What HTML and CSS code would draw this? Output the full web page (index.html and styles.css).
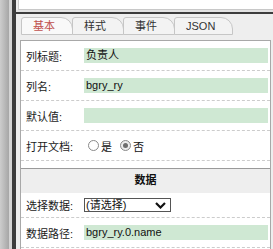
FILE: index.html
```html
<!DOCTYPE html>
<html lang="zh">

<head>
    <meta charset="UTF-8">
    <title>列属性</title>
    <link rel="stylesheet" href="styles.css">
</head>

<body>
    <div class="gutter"></div>
    <div class="gutter-edge"></div>
    <div class="vsplit"></div>
    <div class="main">
        <div class="top-panel"></div>
        <div class="top-gap"></div>
        <div class="hsplit"></div>
        <div class="tabbar">
            <span class="tab active">基本</span>
            <span class="tab">样式</span>
            <span class="tab">事件</span>
            <span class="tab">JSON</span>
        </div>
        <div class="panel">
            <div class="row">
                <span class="label">列标题:</span>
                <span class="field">负责人</span>
            </div>
            <div class="row">
                <span class="label">列名:</span>
                <span class="field">bgry_ry</span>
            </div>
            <div class="row">
                <span class="label">默认值:</span>
                <span class="field"></span>
            </div>
            <div class="row">
                <span class="label">打开文档:</span>
                <span class="radio"></span><span class="radio-text">是</span>
                <span class="radio checked"></span><span class="radio-text">否</span>
            </div>

            <div class="section">数据</div>
            <div class="row short">
                <span class="label">选择数据:</span>
                <span class="select">(请选择)
                    <svg class="chevron" width="11" height="7" viewBox="0 0 11 7">
                        <polyline points="1,1 5.5,5.5 10,1" fill="none" stroke="#111" stroke-width="2.2" />
                    </svg>
                </span>
            </div>
            <div class="row">
                <span class="label">数据路径:</span>
                <span class="field">bgry_ry.0.name</span>
            </div>
        </div>
    </div>
</body>

</html>
```

FILE: styles.css
```css
body {
    margin: 0;
    display: flex;
    height: 100vh;
    overflow: hidden;
    font-family: "Liberation Sans", "Noto Sans CJK SC", sans-serif;
    font-size: 11px;
    color: #222;
    background-color: #eeeeee;
}

.gutter {
    width: 9px;
    flex: none;
    background: linear-gradient(to right, #cdcdcd, #a6a6a6);
}

.gutter-edge {
    width: 3px;
    flex: none;
    background-color: #d4d4d4;
}

.vsplit {
    width: 4px;
    flex: none;
    background-color: #3c3c3c;
}

.main {
    flex: 1;
    display: flex;
    flex-direction: column;
    background-color: #eeeeee;
    min-width: 0;
}

.top-panel {
    height: 9px;
    margin-left: 2px;
    background-color: white;
    border-left: 1px solid #cccccc;
    border-bottom: 1px solid #c8c8c8;
}

.top-gap {
    height: 2px;
    background-color: #e2e2e2;
}

.hsplit {
    height: 2px;
    background-color: #3c3c3c;
}

.tabbar {
    display: flex;
    padding: 3px 0 5px 5px;
}

.tab {
    height: 18px;
    box-sizing: border-box;
    padding: 0 17px 0 11px;
    margin-right: -1px;
    line-height: 16px;
    border: 1px solid #c6c6c6;
    border-radius: 3px 12px 0 0;
    background-color: #f3f3f3;
    color: #333;
}

.tab.active {
    background-color: #f9f9f9;
    color: #c0504d;
}

.panel {
    flex: 1;
    margin: 0 2px 0 4px;
    background-color: white;
    border: 1px solid #a8a8a8;
    border-bottom: none;
}

.row {
    display: flex;
    align-items: center;
    height: 30px;
    box-sizing: border-box;
    padding: 0 2px 0 5px;
    border-bottom: 1px dashed #cccccc;
}

.row.short {
    height: 25px;
}

.label {
    width: 58px;
    flex: none;
    color: #1a1a1a;
}

.field {
    flex: 1;
    height: 15px;
    line-height: 15px;
    padding-left: 2px;
    background-color: #cfe8d3;
    color: #111;
}

.radio {
    width: 9px;
    height: 9px;
    border: 1px solid #8a8a8a;
    border-radius: 50%;
    margin: 0 2px 0 4px;
    background-color: white;
    display: flex;
    align-items: center;
    justify-content: center;
}

.radio.checked {
    margin-left: 8px;
    background-color: #ececec;
}

.radio.checked::after {
    content: "";
    width: 5px;
    height: 5px;
    border-radius: 50%;
    background-color: #6e6e6e;
}

.radio-text {
    color: #111;
}

.section {
    margin-top: 7px;
    height: 25px;
    box-sizing: border-box;
    border-top: 1px solid #9a9a9a;
    background-color: #eeeeee;
    text-align: center;
    line-height: 23px;
    font-weight: bold;
    color: #111;
}

.select {
    width: 87px;
    height: 14px;
    box-sizing: border-box;
    border: 1px solid #555555;
    padding-left: 1px;
    line-height: 12px;
    display: flex;
    align-items: center;
    justify-content: space-between;
    color: #111;
}

.chevron {
    margin-right: 4px;
}
```
